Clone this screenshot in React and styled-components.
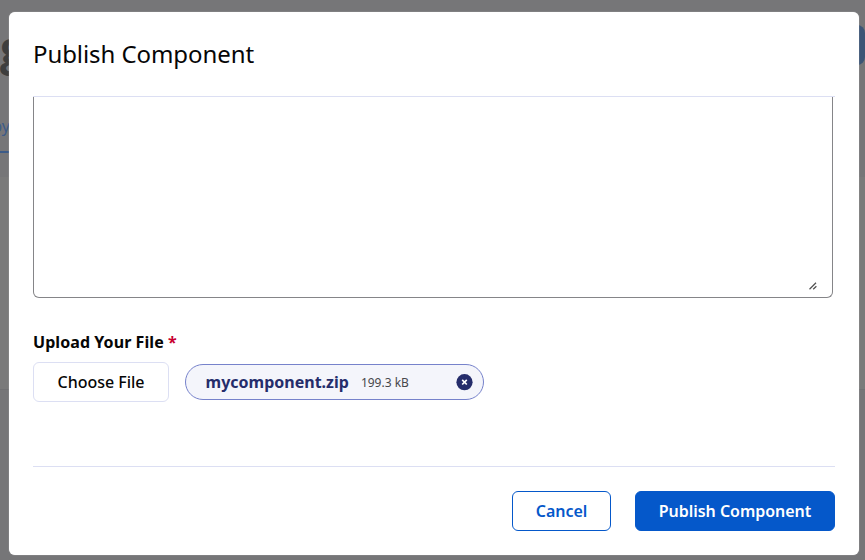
import React from "react";
import styled, { createGlobalStyle } from "styled-components";

const GlobalStyle = createGlobalStyle`
  * { box-sizing: border-box; }
  body { margin: 0; font-family: "Noto Sans", "Open Sans", sans-serif; color: #060606; }
`;

const Screen = styled.div`
  position: relative;
  width: 865px;
  height: 560px;
  overflow: hidden;
  background: #767678;
`;

const PageHeader = styled.header`
  display: flex;
  justify-content: space-between;
  height: 108px;
  padding-top: 25px;
`;

const PageTitle = styled.div`
  margin: -10px 0 0;
  font-family: "Open Sans", sans-serif;
  font-size: 46px;
  font-weight: 700;
  line-height: 64px;
  color: #3e3e3e;
`;

const PageAction = styled.div`
  width: 60px;
  height: 40px;
  border-radius: 8px;
  background: #3c5576;
`;

const PageTab = styled.div`
  width: 40px;
  height: 45px;
  margin-left: -22px;
  padding: 6px 8px 0 0;
  border-bottom: 2px solid #3c5b88;
  font-size: 16px;
  line-height: 24px;
  text-align: right;
  color: #3c5b88;
`;

const PagePanel = styled.div`
  height: 213px;
  margin-top: 24px;
  background: #7a7a7a;
  border-bottom: 1px solid #717173;
`;

const Modal = styled.section`
  position: absolute;
  top: 12px;
  left: 9px;
  display: flex;
  flex-direction: column;
  width: 850px;
  height: 543px;
  padding: 0 24px;
  border-radius: 6px;
  background: #fff;
  box-shadow: 0 0 1px #ddd;
`;

const ModalTitle = styled.h1`
  height: 85px;
  margin: 0;
  padding-top: 25px;
  border-bottom: 1px solid #dcdff3;
  font-size: 24px;
  font-weight: 400;
  line-height: 34px;
  letter-spacing: -0.08px;
`;

const ModalBody = styled.div`
  height: 369px;
`;

const Description = styled.div`
  display: flex;
  align-items: flex-end;
  justify-content: flex-end;
  width: 800px;
  height: 201px;
  padding: 0 15px 7px 0;
  border: 1px solid #858588;
  border-top: 0;
  border-radius: 0 0 6px 6px;
`;

const FieldLabel = styled.div`
  height: 24px;
  margin-top: 32px;
  font-size: 16px;
  font-weight: 700;
  line-height: 24px;
  letter-spacing: 0.07px;
`;

const Required = styled.span`
  color: #c8002f;
`;

const UploadRow = styled.div`
  display: flex;
  align-items: center;
  gap: 16px;
  margin-top: 8px;
`;

const Button = styled.button`
  width: ${(p) => p.$width}px;
  height: 40px;
  padding: 0;
  border: 1px solid ${(p) => p.$border};
  border-radius: 6px;
  background: ${(p) => p.$fill || "#fff"};
  color: ${(p) => p.$color};
  font-family: inherit;
  font-size: 16px;
  font-weight: ${(p) => p.$weight || 600};
  line-height: 24px;
  letter-spacing: -0.03px;
`;

const FileChip = styled.div`
  display: flex;
  align-items: center;
  width: 299.5px;
  height: 36px;
  padding: 0 10px 0 20px;
  margin-left: -0.4px;
  border: 1px solid #7682cb;
  border-radius: 18px;
  background: #f4f5fb;
`;

const FileName = styled.span`
  font-size: 16px;
  font-weight: 700;
  color: #252d6b;
`;

const FileSize = styled.span`
  margin-left: 12px;
  font-size: 12px;
  color: #47474b;
`;

const RemoveButton = styled.button`
  display: flex;
  margin-left: auto;
  padding: 0;
  border: 0;
  background: none;
`;

const ModalFooter = styled.footer`
  display: flex;
  justify-content: flex-end;
  gap: 24px;
  padding-top: 24px;
  border-top: 1px solid #dcdff3;
`;

export default function App() {
  return (
    <>
      <GlobalStyle />
      <Screen>
        <PageHeader>
          <PageTitle>g</PageTitle>
          <PageAction />
        </PageHeader>
        <PageTab>by</PageTab>
        <PagePanel />
        <Modal role="dialog">
          <ModalTitle>Publish Component</ModalTitle>
          <ModalBody>
            <Description>
              <svg width="8" height="8" viewBox="0 0 8 8" fill="none" stroke="#505050" strokeWidth="1.2">
                <path d="M.5 7.2 7 .8M4.2 7.2 7.4 4.2" />
              </svg>
            </Description>
            <FieldLabel>
              Upload Your File <Required>*</Required>
            </FieldLabel>
            <UploadRow>
              <Button $width={136} $border="#dcdff3" $color="#060606" $weight={500}>
                Choose File
              </Button>
              <FileChip>
                <FileName>mycomponent.zip</FileName>
                <FileSize>199.3 kB</FileSize>
                <RemoveButton aria-label="Remove file">
                  <svg width="17" height="17" viewBox="0 0 17 17">
                    <circle cx="8.5" cy="8.2" r="8.1" fill="#252d6b" />
                    <path d="m6.2 5.9 4.6 4.6m0-4.6-4.6 4.6" stroke="#fff" strokeWidth="1.7" />
                  </svg>
                </RemoveButton>
              </FileChip>
            </UploadRow>
          </ModalBody>
          <ModalFooter>
            <Button $width={99} $border="#0558ca" $color="#0558ca">Cancel</Button>
            <Button $width={200} $border="#0558ca" $fill="#0558ca" $color="#fff">
              Publish Component
            </Button>
          </ModalFooter>
        </Modal>
      </Screen>
    </>
  );
}
